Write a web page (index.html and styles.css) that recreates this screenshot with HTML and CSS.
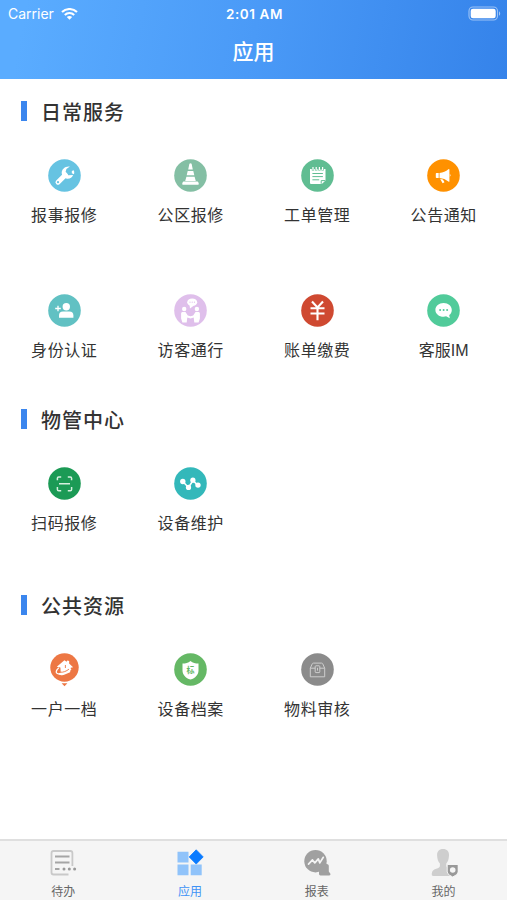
FILE: index.html
```html
<!DOCTYPE html>
<html lang="zh-CN">
<head>
    <meta charset="UTF-8">
    <meta name="viewport" content="width=device-width, initial-scale=1.0">
    <title>应用</title>
    <link rel="stylesheet" href="styles.css">
</head>
<body>
    <div class="app">
        <header class="header">
            <div class="status-bar">
                <div class="carrier">
                    <span>Carrier</span>
                    <svg width="17" height="12" viewBox="0 0 17 12" fill="none" stroke="#fff" stroke-width="2.1">
                        <path d="M1 4.1C5.2 0 11.8 0 16 4.1"/>
                        <path d="M3.8 7C6.5 4.4 10.5 4.4 13.2 7"/>
                        <path d="M5.8 9C7.4 7.6 9.6 7.6 11.2 9L8.5 11.7z" fill="#fff" stroke="none"/>
                    </svg>
                </div>
                <div class="time">2:01 AM</div>
                <div class="battery">
                    <svg width="33" height="15" viewBox="0 0 33 15">
                        <rect x="1" y="1" width="28.5" height="13" rx="4" fill="none" stroke="#fff" stroke-opacity=".5" stroke-width="1.1"/>
                        <rect x="2.7" y="2.8" width="25" height="9.4" rx="2.3" fill="#fff"/>
                        <path d="M31 5.2c1.6.7 1.6 3.9 0 4.6z" fill="#fff" fill-opacity=".55"/>
                    </svg>
                </div>
            </div>
            <h1 class="title">应用</h1>
        </header>

        <main class="content">
            <section class="section">
                <h2 class="section-title">日常服务</h2>
                <div class="grid">
                    <a class="item">
                        <svg class="icon" viewBox="0 0 33 33">
                            <circle cx="16.5" cy="16.5" r="16.3" fill="#66c3e2"/>
                            <path d="M10 23.2L17.3 15.9" stroke="#fff" stroke-width="5" stroke-linecap="round"/>
                            <path d="M21.9 7.5c-4.4-.7-8.3 2.5-8.2 6.3 0 3 2.5 5.7 5.6 5.9 3 .1 5-1.5 5.8-3.8l-4.8.3-2.7-3.2.8-3.1z" fill="#fff"/>
                            <path d="M23.8 12.1l1.9-.8c.7 1.3.7 2.7.2 4l-2.1-1.1z" fill="#fff"/>
                            <circle cx="10" cy="23.2" r="1.1" fill="#66c3e2"/>
                        </svg>
                        <span class="label">报事报修</span>
                    </a>
                    <a class="item">
                        <svg class="icon" viewBox="0 0 33 33">
                            <circle cx="16.5" cy="16.5" r="16.3" fill="#84bfa4"/>
                            <path d="M15.4 4.8q1.1-1 2.2 0l1.2 5.6h-4.6zM13.7 12h5.6l1 4.2h-7.6zM12.4 17.8h8.2l1.2 4.2H11.2zM9.7 22.5h13.6q.8 0 1 .8l.5 1.4q.2 1-.8 1H9q-1 0-.8-1l.5-1.4q.2-.8 1-.8z" fill="#fff"/>
                        </svg>
                        <span class="label">公区报修</span>
                    </a>
                    <a class="item">
                        <svg class="icon" viewBox="0 0 33 33">
                            <circle cx="16.5" cy="16.5" r="16.3" fill="#60bd92"/>
                            <path d="M9 10h15.5v11.5L20.8 25H10.1Q9 25 9 23.9z" fill="#fff"/>
                            <path d="M12 8v3.5M15.2 8v3.5M18.4 8v3.5M21.6 8v3.5" stroke="#60bd92" stroke-width="2.4"/>
                            <path d="M12 7.9v3.2M15.2 7.9v3.2M18.4 7.9v3.2M21.6 7.9v3.2" stroke="#fff" stroke-width="1.2"/>
                            <path d="M11.4 14.5h10.5M11.4 17.6h10.5M11.4 20.8h6.8M20.2 24.8v-3.2h4" fill="none" stroke="#60bd92" stroke-width="1"/>
                        </svg>
                        <span class="label">工单管理</span>
                    </a>
                    <a class="item">
                        <svg class="icon" viewBox="0 0 33 33">
                            <circle cx="16.5" cy="16.5" r="16.3" fill="#ff9100"/>
                            <path d="M9.6 14h2.1v5H9.6q-.8 0-.8-.8v-3.4q0-.8.8-.8zM12.5 13.9c3.6-.2 6.3-1.500 8.900-3.700q1-.7 1 .5v11.500q0 1.100-1 .4c-2.600-2-5.300-3.200-8.900-3.500zM13.200 19.900l2.700.6 1.600 2.700-1.900 1.100z" fill="#fff"/>
                            <path d="M22.8 14.8q1.7 1.5 0 3.2z" fill="#fff"/>
                        </svg>
                        <span class="label">公告通知</span>
                    </a>
                    <a class="item">
                        <svg class="icon" viewBox="0 0 33 33">
                            <circle cx="16.5" cy="16.5" r="16.3" fill="#61c1c3"/>
                            <circle cx="18.3" cy="12.7" r="3.7" fill="#fff"/>
                            <path d="M11 23.7v-2.3q0-3.6 4-3.8h6.4q4 .2 4 3.8v2.3z" fill="#fff"/>
                            <path d="M7.2 14.5h5.6M10 11.7v5.6" stroke="#fff" stroke-width="1.3"/>
                        </svg>
                        <span class="label">身份认证</span>
                    </a>
                    <a class="item">
                        <svg class="icon" viewBox="0 0 33 33">
                            <circle cx="16.5" cy="16.5" r="16.3" fill="#dfbfeb"/>
                            <ellipse cx="18.2" cy="8.2" rx="5" ry="3.8" fill="#fff"/>
                            <path d="M15.5 10.5l.5 4 4-3z" fill="#fff"/>
                            <circle cx="16" cy="8.2" r=".6" fill="#dfbfeb"/>
                            <circle cx="18.2" cy="8.2" r=".6" fill="#dfbfeb"/>
                            <circle cx="20.4" cy="8.2" r=".6" fill="#dfbfeb"/>
                            <circle cx="10.2" cy="15" r="2.2" fill="#fff"/>
                            <circle cx="22.9" cy="15" r="2.2" fill="#fff"/>
                            <path d="M8.3 18h3.2l2.3 3.4 2.7.8 2.7-.8 2.3-3.4h3.2q1.2.2 1.2 1.4v5.1l-1.3 4h-4.3l-.6-5.1-3.2 1.2-3.2-1.2-.6 5.1H8.4l-1.3-4v-5.1q0-1.2 1.2-1.4z" fill="#fff"/>
                        </svg>
                        <span class="label">访客通行</span>
                    </a>
                    <a class="item">
                        <svg class="icon" viewBox="0 0 33 33">
                            <circle cx="16.5" cy="16.5" r="16.3" fill="#cf4931"/>
                            <path d="M11 7.5l5.5 6 5.5-6M16.5 13.5v12.8M9.5 14.2h14M9.5 19.5h14" fill="none" stroke="#fff" stroke-width="2.1"/>
                        </svg>
                        <span class="label">账单缴费</span>
                    </a>
                    <a class="item">
                        <svg class="icon" viewBox="0 0 33 33">
                            <circle cx="16.5" cy="16.5" r="16.3" fill="#51cb9a"/>
                            <path d="M16.6 9c4.7 0 8.2 3 8.2 6.9 0 2.2-1 4-2.6 5.2l.6 3.2-3.7-2c-.8.3-1.7.4-2.5.4-4.6 0-8.2-2.9-8.2-6.8S12 9 16.6 9z" fill="#fff"/>
                            <circle cx="13.1" cy="16" r="1" fill="#51cb9a"/>
                            <circle cx="16.6" cy="16" r="1" fill="#51cb9a"/>
                            <circle cx="20.1" cy="16" r="1" fill="#51cb9a"/>
                        </svg>
                        <span class="label label-im">客服IM</span>
                    </a>
                </div>
            </section>

            <section class="section">
                <h2 class="section-title">物管中心</h2>
                <div class="grid">
                    <a class="item">
                        <svg class="icon" viewBox="0 0 33 33">
                            <circle cx="16.5" cy="16.5" r="16.3" fill="#1b9a55"/>
                            <path d="M9.4 13.2v-2q0-1.3 1.3-1.3h2.5M19.8 9.9h2.5q1.3 0 1.3 1.3v2M9.4 20v2.5q0 1.3 1.3 1.3h2.5M19.8 23.8h2.5q1.3 0 1.3-1.3V20M11 16.8h11" fill="none" stroke="#d5efdf" stroke-width="1.5"/>
                        </svg>
                        <span class="label">扫码报修</span>
                    </a>
                    <a class="item">
                        <svg class="icon" viewBox="0 0 33 33">
                            <circle cx="16.5" cy="16.5" r="16.3" fill="#33b8ba"/>
                            <path d="M8.8 14.5l5.7 6 4.4-7 5 4.8" fill="none" stroke="#fff" stroke-width="1.6"/>
                            <circle cx="8.8" cy="14.5" r="2.7" fill="#fff"/>
                            <circle cx="14.5" cy="20.4" r="2.6" fill="#fff"/>
                            <circle cx="18.9" cy="13.2" r="2.6" fill="#fff"/>
                            <circle cx="24" cy="18.1" r="2.7" fill="#fff"/>
                        </svg>
                        <span class="label">设备维护</span>
                    </a>
                </div>
            </section>

            <section class="section">
                <h2 class="section-title">公共资源</h2>
                <div class="grid">
                    <a class="item">
                        <svg class="icon" viewBox="0 0 33 33">
                            <circle cx="16.5" cy="14.5" r="14.2" fill="#ed7744"/>
                            <path d="M13.6 30.3h5.8l-2.9 3z" fill="#ed7744"/>
                            <path d="M8.8 13.7l7.6-6.4 2.2 1.4.6-1.1 2 .5-.1 2.3 4 3.8-2.3.5-.7 4.5-5.3 2.4c-2.8 1.2-5.1.5-6.3-1.2l2.2-1-.3-4.9z" fill="#fff"/>
                            <path d="M10.8 14.7c-3.8 3.4-3.3 6 .4 6.4 4.2.4 8.4-1.9 11.9-5.2" fill="none" stroke="#fff" stroke-width="1.2"/>
                            <path d="M12 19.2c3.3.4 6.4-1 9-3.1M17.4 12v3" fill="none" stroke="#ed7744" stroke-width=".9"/>
                        </svg>
                        <span class="label">一户一档</span>
                    </a>
                    <a class="item">
                        <svg class="icon" viewBox="0 0 33 33">
                            <circle cx="16.5" cy="16.5" r="16.3" fill="#65b865"/>
                            <path d="M16.5 7.9c2.3 1.8 4.9 2.5 8 2.6v6.9c0 4.3-3.1 7.5-8 9.2-4.900-1.700-8-4.900-8-9.200v-6.900c3.100-.1 5.700-.8 8-2.600z" fill="#fff"/>
                            <text x="16.5" y="20" class="shield-text">标</text>
                        </svg>
                        <span class="label">设备档案</span>
                    </a>
                    <a class="item">
                        <svg class="icon" viewBox="0 0 33 33">
                            <circle cx="16.5" cy="16.5" r="16.3" fill="#8b8b8b"/>
                            <g fill="none" stroke="#cecece" stroke-width="1">
                                <path d="M9.3 15.2l2-4.5q.3-.6 1-.6h8.4q.7 0 1 .6l2 4.5v8.600H9.300zM9.300 15.200h4.800M18.900 15.200h4.800"/>
                                <rect x="14.2" y="12.8" width="4.6" height="6.8" rx=".8"/>
                                <path d="M16.5 14.8v2.8"/>
                            </g>
                        </svg>
                        <span class="label">物料审核</span>
                    </a>
                </div>
            </section>
        </main>

        <nav class="tab-bar">
            <a class="tab">
                <svg class="tab-icon" viewBox="0 0 28 28">
                    <path d="M23.4 17V4q0-2-2-2H4.5q-2 0-2 2v19.500q0 2 2 2h15" fill="none" stroke="#c9c9c9" stroke-width="1.8"/>
                    <path d="M6 7.5h14.500M6 13.400h14.500" stroke="#a5a5a5" stroke-width="2"/>
                    <path d="M6 20h4.5" stroke="#a5a5a5" stroke-width="2"/>
                    <g fill="#999">
                        <circle cx="15" cy="20" r="1.5"/>
                        <circle cx="20.3" cy="20" r="1.5"/>
                        <circle cx="25.6" cy="20" r="1.5"/>
                    </g>
                </svg>
                <span>待办</span>
            </a>
            <a class="tab active">
                <svg class="tab-icon" viewBox="0 0 28 28">
                    <path d="M1.5 2.8h11v10.8h-11zM1.5 15.6h11v10.7h-11zM14.7 15.6h11v10.7h-11z" fill="#90c3fa"/>
                    <path d="M20.2.8l7 7.1-7 7.2-7-7.2z" fill="#0a7bff" stroke="#0a7bff" stroke-width=".8" stroke-linejoin="round"/>
                </svg>
                <span>应用</span>
            </a>
            <a class="tab">
                <svg class="tab-icon" viewBox="0 0 28 28">
                    <circle cx="12.5" cy="12.2" r="11.2" fill="#a0a0a0"/>
                    <path d="M21 13.5l3.500 1.800c1 .4 1.300.8 1.300 1.800v5.500l1.600 2.200q.5 1.600-1.200 1.600H17.400q-1.400 0-1.400-1.400v-2.500z" fill="#a0a0a0"/>
                    <path d="M5.5 15.2l4-4.300 2.300 3 3.500-4 1.500 4 3.500-5.600" fill="none" stroke="#f5f5f5" stroke-width="1.7" stroke-linecap="round" stroke-linejoin="round"/>
                </svg>
                <span>报表</span>
            </a>
            <a class="tab">
                <svg class="tab-icon" viewBox="0 0 28 28">
                    <path d="M13 0c4 0 6.300 2.600 6 6.400-.2 3.800-1 6.300-2.700 8.100v2.300c0 1.400 1 1.700 2.800 2.400L21 27H3.600c-1.700 0-2-.8-1.800-2.500.3-2.700 1.500-3.700 4.400-4.700 2.600-.9 3.700-1.400 3.700-3v-2.300C8.100 12.700 7.300 10.200 7.100 6.400 6.900 2.600 9.100 0 13 0z" fill="#cecece"/>
                    <path d="M17.200 15.500h11v7.500q0 2.700-5.500 5-5.500-2.300-5.500-5z" fill="#999" stroke="#f5f5f5" stroke-width="1"/>
                    <circle cx="22.700" cy="21" r="2.800" fill="#f5f5f5"/>
                </svg>
                <span>我的</span>
            </a>
        </nav>
    </div>
</body>
</html>
```
FILE: styles.css
```css
* {
    box-sizing: border-box;
}
body {
    margin: 0;
    font-family: "Liberation Sans", "Noto Sans CJK SC", sans-serif;
    background-color: #fff;
    color: #333;
}
.app {
    display: flex;
    flex-direction: column;
    height: 900px;
    overflow: hidden;
}
.header {
    height: 79px;
    background: linear-gradient(100deg, #5aacff 5%, #4a9af7 50%, #3583ea 100%);
    color: #fff;
}
.status-bar {
    display: grid;
    grid-template-columns: 1fr auto 1fr;
    align-items: center;
    height: 27px;
    padding: 0 6px 0 8px;
    font-family: Inter, "Liberation Sans", sans-serif;
    font-size: 14px;
}
.carrier {
    display: flex;
    align-items: center;
    gap: 7px;
}
.time {
    font-size: 13.5px;
    font-weight: 600;
    letter-spacing: 0.6px;
}
.battery {
    display: flex;
    justify-content: flex-end;
}
.title {
    margin: 0;
    font-size: 21px;
    font-weight: 500;
    line-height: 50px;
    text-align: center;
}
.content {
    flex: 1;
}
.section-title {
    display: flex;
    align-items: center;
    gap: 14px;
    height: 64px;
    margin: 0;
    padding-left: 21px;
    font-size: 20px;
    font-weight: 500;
    letter-spacing: 1px;
}
.section-title::before {
    content: "";
    width: 6px;
    height: 20px;
    background-color: #3b86ee;
}
.grid {
    display: grid;
    grid-template-columns: repeat(4, 1fr);
    align-content: start;
    row-gap: 26px;
    min-height: 122px;
    padding-left: 1px;
}
.item {
    display: flex;
    flex-direction: column;
    align-items: center;
    height: 109px;
    padding-top: 15.5px;
}
.icon {
    width: 33px;
    height: 33px;
    overflow: visible;
}
.label {
    margin-top: 12.5px;
    font-size: 16px;
    line-height: 24px;
    letter-spacing: 0.6px;
}
.label-im {
    letter-spacing: 0;
}
.shield-text {
    font-size: 8px;
    font-weight: 700;
    text-anchor: middle;
    fill: #65b865;
}
.tab-bar {
    display: grid;
    grid-template-columns: repeat(4, 1fr);
    height: 61px;
    border-top: 2px solid #dfdfdf;
    background-color: #f5f5f5;
}
.tab {
    display: flex;
    flex-direction: column;
    align-items: center;
    padding-top: 8px;
    font-size: 12px;
    line-height: 18px;
    color: #666;
}
.tab-icon {
    width: 28px;
    height: 28px;
    margin-bottom: 6px;
}
.tab.active {
    color: #3f93f5;
}
```
